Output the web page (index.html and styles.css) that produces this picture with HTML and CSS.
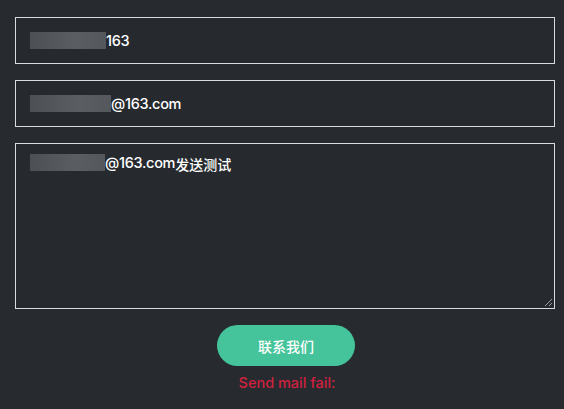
FILE: index.html
```html
<!DOCTYPE html>
<html>
<head>
<meta charset="utf-8">
<link rel="stylesheet" href="styles.css">
</head>
<body>
<form class="form">
  <div class="field"><span class="blur b1"></span>163</div>
  <div class="field"><span class="blur b2"></span>@163.com</div>
  <div class="field area"><span class="blur b3"></span>@163.com<span class="cjk">发送测试</span>
    <svg class="grip" width="9" height="9" viewBox="0 0 9 9"><path d="M8 1 L1 8 M8 5 L5 8" stroke="#9a9ea2" stroke-width="1"/></svg>
  </div>
  <div class="actions">
    <button type="button" class="btn">联系我们</button>
    <div class="msg">Send mail fail:</div>
  </div>
</form>
</body>
</html>
```
FILE: styles.css
```css
html, body { margin: 0; padding: 0; }
body {
  background: #272b2f;
  width: 564px;
  height: 409px;
  overflow: hidden;
  font-family: "Inter", "Noto Sans CJK SC", sans-serif;
}
.form {
  padding: 17px 0 0 15px;
  display: flex;
  flex-direction: column;
  gap: 16px;
}
.field {
  position: relative;
  box-sizing: border-box;
  width: 540px;
  height: 47px;
  border: 1px solid #d9dadb;
  background: #262a2e;
  color: #ffffff;
  font-size: 14.5px;
  font-weight: 500;
  letter-spacing: -0.3px;
  padding: 0 0 0 14px;
  display: flex;
  align-items: center;
}
.area {
  height: 166px;
  align-items: flex-start;
  padding-top: 10px;
}
.cjk {
  font-family: "Noto Sans CJK SC", sans-serif;
  font-size: 14px;
  letter-spacing: 0;
}
.blur {
  display: inline-block;
  height: 17px;
  background: linear-gradient(90deg, #4c5054, #5a5e62 60%, #54585c);
}
.b1 { width: 76px; }
.b2 { width: 81px; }
.b3 { width: 75px; }
.grip { position: absolute; right: 1px; bottom: 1px; }
.actions {
  display: flex;
  flex-direction: column;
  align-items: center;
  width: 540px;
  gap: 8px;
}
.btn {
  width: 138px;
  height: 41px;
  border: none;
  border-radius: 21px;
  background: #45c39a;
  color: #ffffff;
  font-family: "Noto Sans CJK SC", sans-serif;
  font-size: 14px;
  font-weight: 500;
  margin-left: 2px;
}
.msg {
  color: #d0203f;
  font-size: 14.5px;
  font-weight: 500;
  font-family: "Inter", sans-serif;
  margin-left: 4px;
}
```
